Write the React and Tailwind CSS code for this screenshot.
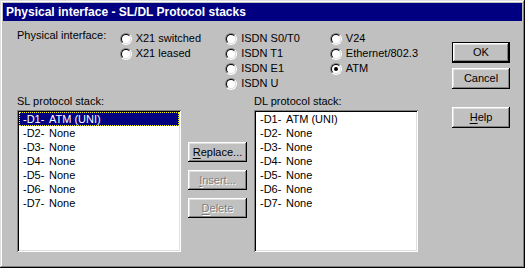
import React from 'react';

const raised =
  'shadow-[inset_-1px_-1px_0_#000,inset_1px_1px_0_#fff,inset_-2px_-2px_0_#808080,inset_2px_2px_0_#dfdfdf]';
const defaultRaised =
  'shadow-[inset_0_0_0_1px_#000,inset_-2px_-2px_0_#000,inset_2px_2px_0_#fff,inset_-3px_-3px_0_#808080,inset_3px_3px_0_#dfdfdf]';
const sunken =
  'shadow-[inset_1px_1px_0_#808080,inset_-1px_-1px_0_#fff,inset_2px_2px_0_#000,inset_-2px_-2px_0_#dfdfdf]';

const stack = [
  ['-D1-', 'ATM (UNI)'],
  ['-D2-', 'None'],
  ['-D3-', 'None'],
  ['-D4-', 'None'],
  ['-D5-', 'None'],
  ['-D6-', 'None'],
  ['-D7-', 'None'],
];

const Radio = ({ label, checked }) => (
  <div className="flex h-[15px] items-center">
    <span className="flex h-[12px] w-[12px] shrink-0 items-center justify-center rounded-full border border-t-[#808080] border-l-[#808080] border-b-white border-r-white">
      <span className="flex h-[10px] w-[10px] items-center justify-center rounded-full border border-t-black border-l-black border-b-[#dfdfdf] border-r-[#dfdfdf] bg-white">
        {checked && <span className="h-[4px] w-[4px] rounded-full bg-black" />}
      </span>
    </span>
    <span className="ml-[4px] whitespace-nowrap leading-[15px]">{label}</span>
  </div>
);

const Button = ({ children, isDefault, disabled, className = '' }) => (
  <div
    className={`flex items-center justify-center bg-[#c0c0c0] ${isDefault ? defaultRaised : raised} ${
      disabled ? 'text-[#808080] [text-shadow:1px_1px_0_#fff]' : 'text-black'
    } ${className}`}
  >
    {children}
  </div>
);

const Mnemonic = ({ first, rest }) => (
  <span>
    <span className="underline underline-offset-[2px]">{first}</span>
    {rest}
  </span>
);

const ListBox = ({ selected }) => (
  <div className={`h-[142px] w-[164px] bg-white p-[2px] ${sunken}`}>
    {stack.map(([code, name], i) => (
      <div
        key={code}
        className={`flex h-[14px] items-center border pl-[3px] leading-[14px] ${
          selected && i === 0
            ? 'border-dotted border-[#ffff00] bg-[#000080] text-white'
            : 'border-transparent'
        }`}
      >
        <span className="w-[26px]">{code}</span>
        <span>{name}</span>
      </div>
    ))}
  </div>
);

export default function App() {
  return (
    <div className="h-[268px] w-[525px] bg-[#c0c0c0] font-['Liberation_Sans',Arial,sans-serif] text-[11px] text-black">
      <div className="flex h-full w-full flex-col p-[3px] shadow-[inset_-1px_-1px_0_#000,inset_1px_1px_0_#dfdfdf,inset_-2px_-2px_0_#808080,inset_2px_2px_0_#fff]">
        <div className="flex h-[18px] items-center bg-[#000080] pl-[3px] text-[12px] font-bold leading-[18px] text-white">
          Physical interface - SL/DL Protocol stacks
        </div>

        <div className="flex pl-[14px] pt-[10px]">
          <div className="flex w-[401px] flex-col">
            <div className="flex">
              <div className="-mt-[2px] w-[105px] leading-[13px]">Physical interface:</div>
              <div className="w-[108px]">
                <Radio label="X21 switched" />
                <Radio label="X21 leased" />
              </div>
              <div className="w-[107px]">
                <Radio label="ISDN S0/T0" />
                <Radio label="ISDN T1" />
                <Radio label="ISDN E1" />
                <Radio label="ISDN U" />
              </div>
              <div>
                <Radio label="V24" />
                <Radio label="Ethernet/802.3" />
                <Radio label="ATM" checked />
              </div>
            </div>

            <div className="mt-[4px] flex items-start">
              <div className="flex flex-col">
                <div className="h-[13px] leading-[13px]">SL protocol stack:</div>
                <div className="mt-[2px]">
                  <ListBox selected />
                </div>
              </div>
              <div className="ml-[7px] mt-[47px] flex flex-col gap-[8px]">
                <Button className="h-[20px] w-[59px]">
                  <Mnemonic first="R" rest="eplace..." />
                </Button>
                <Button className="h-[20px] w-[59px]" disabled>
                  <Mnemonic first="I" rest="nsert..." />
                </Button>
                <Button className="h-[20px] w-[59px]" disabled>
                  <Mnemonic first="D" rest="elete" />
                </Button>
              </div>
              <div className="ml-[7px] flex flex-col">
                <div className="h-[13px] leading-[13px]">DL protocol stack:</div>
                <div className="mt-[2px]">
                  <ListBox />
                </div>
              </div>
            </div>
          </div>

          <div className="ml-[34px] flex flex-col pt-[11px]">
            <Button isDefault className="h-[21px] w-[58px]">OK</Button>
            <Button className="mt-[5px] h-[21px] w-[58px]">Cancel</Button>
            <Button className="mt-[18px] h-[21px] w-[58px]">
              <Mnemonic first="H" rest="elp" />
            </Button>
          </div>
        </div>
      </div>
    </div>
  );
}
